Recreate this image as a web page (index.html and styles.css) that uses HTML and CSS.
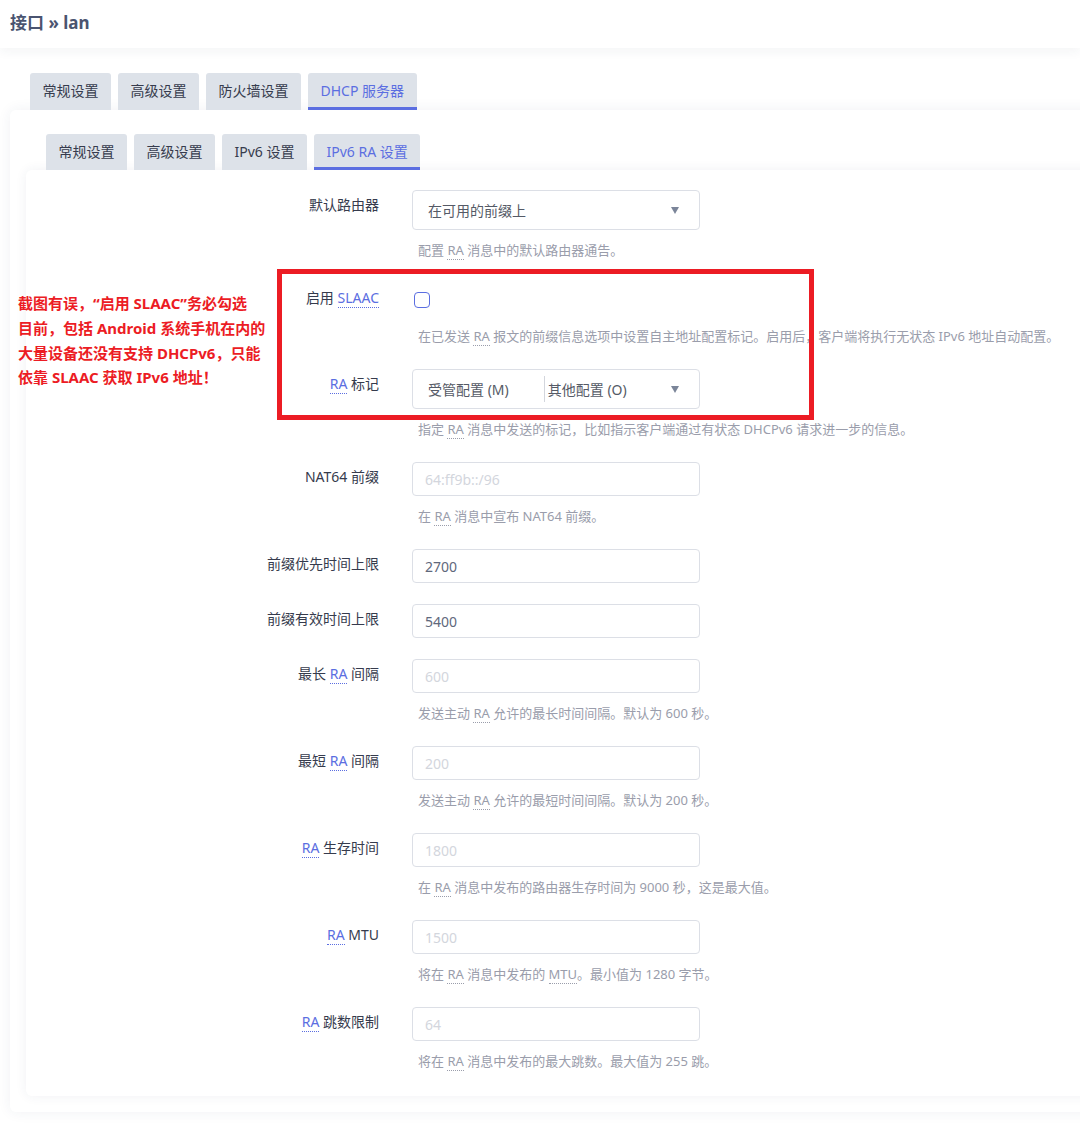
FILE: index.html
```html
<!DOCTYPE html>
<html lang="zh-CN">
<head>
<meta charset="utf-8">
<title>接口 » lan</title>
<link rel="stylesheet" href="styles.css">
</head>
<body>
<div class="page">
  <header class="topbar"><h2 class="crumb">接口 » lan</h2></header>

  <div class="main">
    <ul class="tabs tabs-outer">
      <li class="tab">常规设置</li>
      <li class="tab">高级设置</li>
      <li class="tab">防火墙设置</li>
      <li class="tab active">DHCP 服务器</li>
    </ul>
    <div class="card-outer">
      <ul class="tabs tabs-inner">
        <li class="tab">常规设置</li>
        <li class="tab">高级设置</li>
        <li class="tab">IPv6 设置</li>
        <li class="tab active">IPv6 RA 设置</li>
      </ul>
      <div class="card-inner">
        <div class="row">
          <div class="lbl">默认路由器</div>
          <div class="ctl">
            <div class="select"><span class="sel-text">在可用的前缀上</span><span class="arrow"></span></div>
            <div class="desc">配置 <abbr>RA</abbr> 消息中的默认路由器通告。</div>
          </div>
        </div>

        <div class="row">
          <div class="lbl">启用 <abbr class="blue">SLAAC</abbr></div>
          <div class="ctl">
            <div class="check-wrap"><span class="checkbox"></span></div>
            <div class="desc">在已发送 <abbr>RA</abbr> 报文的前缀信息选项中设置自主地址配置标记。启用后，客户端将执行无状态 IPv6 地址自动配置。</div>
          </div>
        </div>

        <div class="row">
          <div class="lbl"><abbr class="blue">RA</abbr> 标记</div>
          <div class="ctl">
            <div class="select"><span class="sel-text">受管配置 (M)</span><span class="sel-sep"></span><span class="sel-text2">其他配置 (O)</span><span class="arrow"></span></div>
            <div class="desc">指定 <abbr>RA</abbr> 消息中发送的标记，比如指示客户端通过有状态 DHCPv6 请求进一步的信息。</div>
          </div>
        </div>

        <div class="row">
          <div class="lbl">NAT64 前缀</div>
          <div class="ctl">
            <div class="input ph">64:ff9b::/96</div>
            <div class="desc">在 <abbr>RA</abbr> 消息中宣布 NAT64 前缀。</div>
          </div>
        </div>

        <div class="row">
          <div class="lbl">前缀优先时间上限</div>
          <div class="ctl"><div class="input">2700</div></div>
        </div>

        <div class="row">
          <div class="lbl">前缀有效时间上限</div>
          <div class="ctl"><div class="input">5400</div></div>
        </div>

        <div class="row">
          <div class="lbl">最长 <abbr class="blue">RA</abbr> 间隔</div>
          <div class="ctl">
            <div class="input ph">600</div>
            <div class="desc">发送主动 <abbr>RA</abbr> 允许的最长时间间隔。默认为 600 秒。</div>
          </div>
        </div>

        <div class="row">
          <div class="lbl">最短 <abbr class="blue">RA</abbr> 间隔</div>
          <div class="ctl">
            <div class="input ph">200</div>
            <div class="desc">发送主动 <abbr>RA</abbr> 允许的最短时间间隔。默认为 200 秒。</div>
          </div>
        </div>

        <div class="row">
          <div class="lbl"><abbr class="blue">RA</abbr> 生存时间</div>
          <div class="ctl">
            <div class="input ph">1800</div>
            <div class="desc">在 <abbr>RA</abbr> 消息中发布的路由器生存时间为 9000 秒，这是最大值。</div>
          </div>
        </div>

        <div class="row">
          <div class="lbl"><abbr class="blue">RA</abbr> MTU</div>
          <div class="ctl">
            <div class="input ph">1500</div>
            <div class="desc">将在 <abbr>RA</abbr> 消息中发布的 <abbr>MTU</abbr>。最小值为 1280 字节。</div>
          </div>
        </div>

        <div class="row">
          <div class="lbl"><abbr class="blue">RA</abbr> 跳数限制</div>
          <div class="ctl">
            <div class="input ph">64</div>
            <div class="desc">将在 <abbr>RA</abbr> 消息中发布的最大跳数。最大值为 255 跳。</div>
          </div>
        </div>
      </div>
    </div>
  </div>

  <div class="note-box"></div>
  <p class="note">截图有误，“启用 SLAAC”务必勾选<br>目前，包括 Android 系统手机在内的<br>大量设备还没有支持 DHCPv6，只能<br>依靠 SLAAC 获取 IPv6 地址！</p>
</div>
</body>
</html>
```

FILE: styles.css
```css
html, body {
  margin: 0;
  padding: 0;
  overflow: hidden;
  background: #ffffff;
}
body {
  font-family: "Noto Sans", "Noto Sans CJK SC", sans-serif;
  color: #363b4d;
  font-size: 14px;
}
.page {
  position: relative;
  width: 1080px;
  height: 1143px;
}
.topbar {
  height: 48px;
  background: #fff;
  box-shadow: 0 4px 10px rgba(40, 50, 80, 0.05);
  display: flex;
  align-items: center;
  padding-left: 10px;
}
.crumb {
  margin: 0;
  font-size: 17px;
  font-weight: 700;
  color: #4a5470;
  line-height: 1;
  margin-top: -4px;
}
.main {
  padding: 25px 0 0 10px;
}
.tabs {
  list-style: none;
  margin: 0;
  padding: 0;
  display: flex;
  gap: 7px;
}
.tabs-outer {
  margin-left: 20px;
}
.tab {
  background: #dde2e9;
  color: #363b4d;
  font-size: 14px;
  padding: 0 12.5px;
  border-radius: 3px 3px 0 0;
  display: flex;
  align-items: center;
  box-sizing: border-box;
  border-bottom: 3px solid transparent;
}
.tabs-outer .tab {
  height: 37px;
}
.tabs-inner .tab {
  height: 36px;
}
.tab.active {
  color: #5b6ee1;
  border-bottom-color: #5b6ee1;
}
.card-outer {
  margin-right: -60px;
  background: #fff;
  border-radius: 6px;
  box-shadow: 0 0 14px rgba(40, 60, 100, 0.07);
  padding: 24px 0 16px 16px;
}
.tabs-inner {
  margin-left: 20px;
}
.card-inner {
  background: #fff;
  border-radius: 6px;
  box-shadow: 0 0 12px rgba(40, 60, 100, 0.07);
  padding: 20px 0 2px 0;
}
.row {
  display: grid;
  grid-template-columns: 353px 1fr;
  column-gap: 33px;
  margin-bottom: 21px;
}
.lbl {
  text-align: right;
  font-size: 14px;
  line-height: 20px;
  padding-top: 5px;
  color: #363b4d;
}
.ctl {
  min-width: 0;
}
abbr {
  text-decoration: none;
  border-bottom: 1px dotted currentColor;
  cursor: help;
}
.blue {
  color: #5b6ee1;
}
.select {
  width: 288px;
  height: 40px;
  box-sizing: border-box;
  border: 1px solid #dcdfe6;
  border-radius: 4px;
  display: flex;
  align-items: center;
  padding: 0 20px 0 15px;
  color: #555a66;
  font-size: 14px;
}
.sel-text {
  flex: none;
}
.sel-sep {
  width: 1px;
  height: 26px;
  background: #d3d6dd;
  margin-left: 35px;
  margin-right: 3px;
}
.arrow {
  margin-left: auto;
  width: 0;
  height: 0;
  border-left: 4px solid transparent;
  border-right: 4px solid transparent;
  border-top: 7px solid #7b8599;
}
.input {
  width: 288px;
  height: 34px;
  box-sizing: border-box;
  border: 1px solid #dcdfe6;
  border-radius: 4px;
  padding: 0 12px;
  display: flex;
  align-items: center;
  color: #5f687c;
  font-size: 14px;
}
.input.ph {
  color: #d3d6dd;
}
.check-wrap {
  height: 33px;
  display: flex;
  align-items: center;
  padding-left: 2px;
}
.checkbox {
  width: 16px;
  height: 16px;
  box-sizing: border-box;
  border: 1.5px solid #5b6ee1;
  border-radius: 4px;
  background: #fff;
}
.desc {
  margin-top: 10px;
  margin-bottom: 2px;
  padding-left: 6px;
  font-size: 13px;
  line-height: 20px;
  color: #9a9dab;
  white-space: nowrap;
}
.note-box {
  position: absolute;
  left: 277px;
  top: 269px;
  width: 537px;
  height: 151px;
  box-sizing: border-box;
  border: 5px solid #ec1c24;
}
.note {
  position: absolute;
  left: 18px;
  top: 291px;
  margin: 0;
  font-size: 15px;
  line-height: 24.8px;
  font-weight: 700;
  color: #ec1c24;
  white-space: nowrap;
}
```
